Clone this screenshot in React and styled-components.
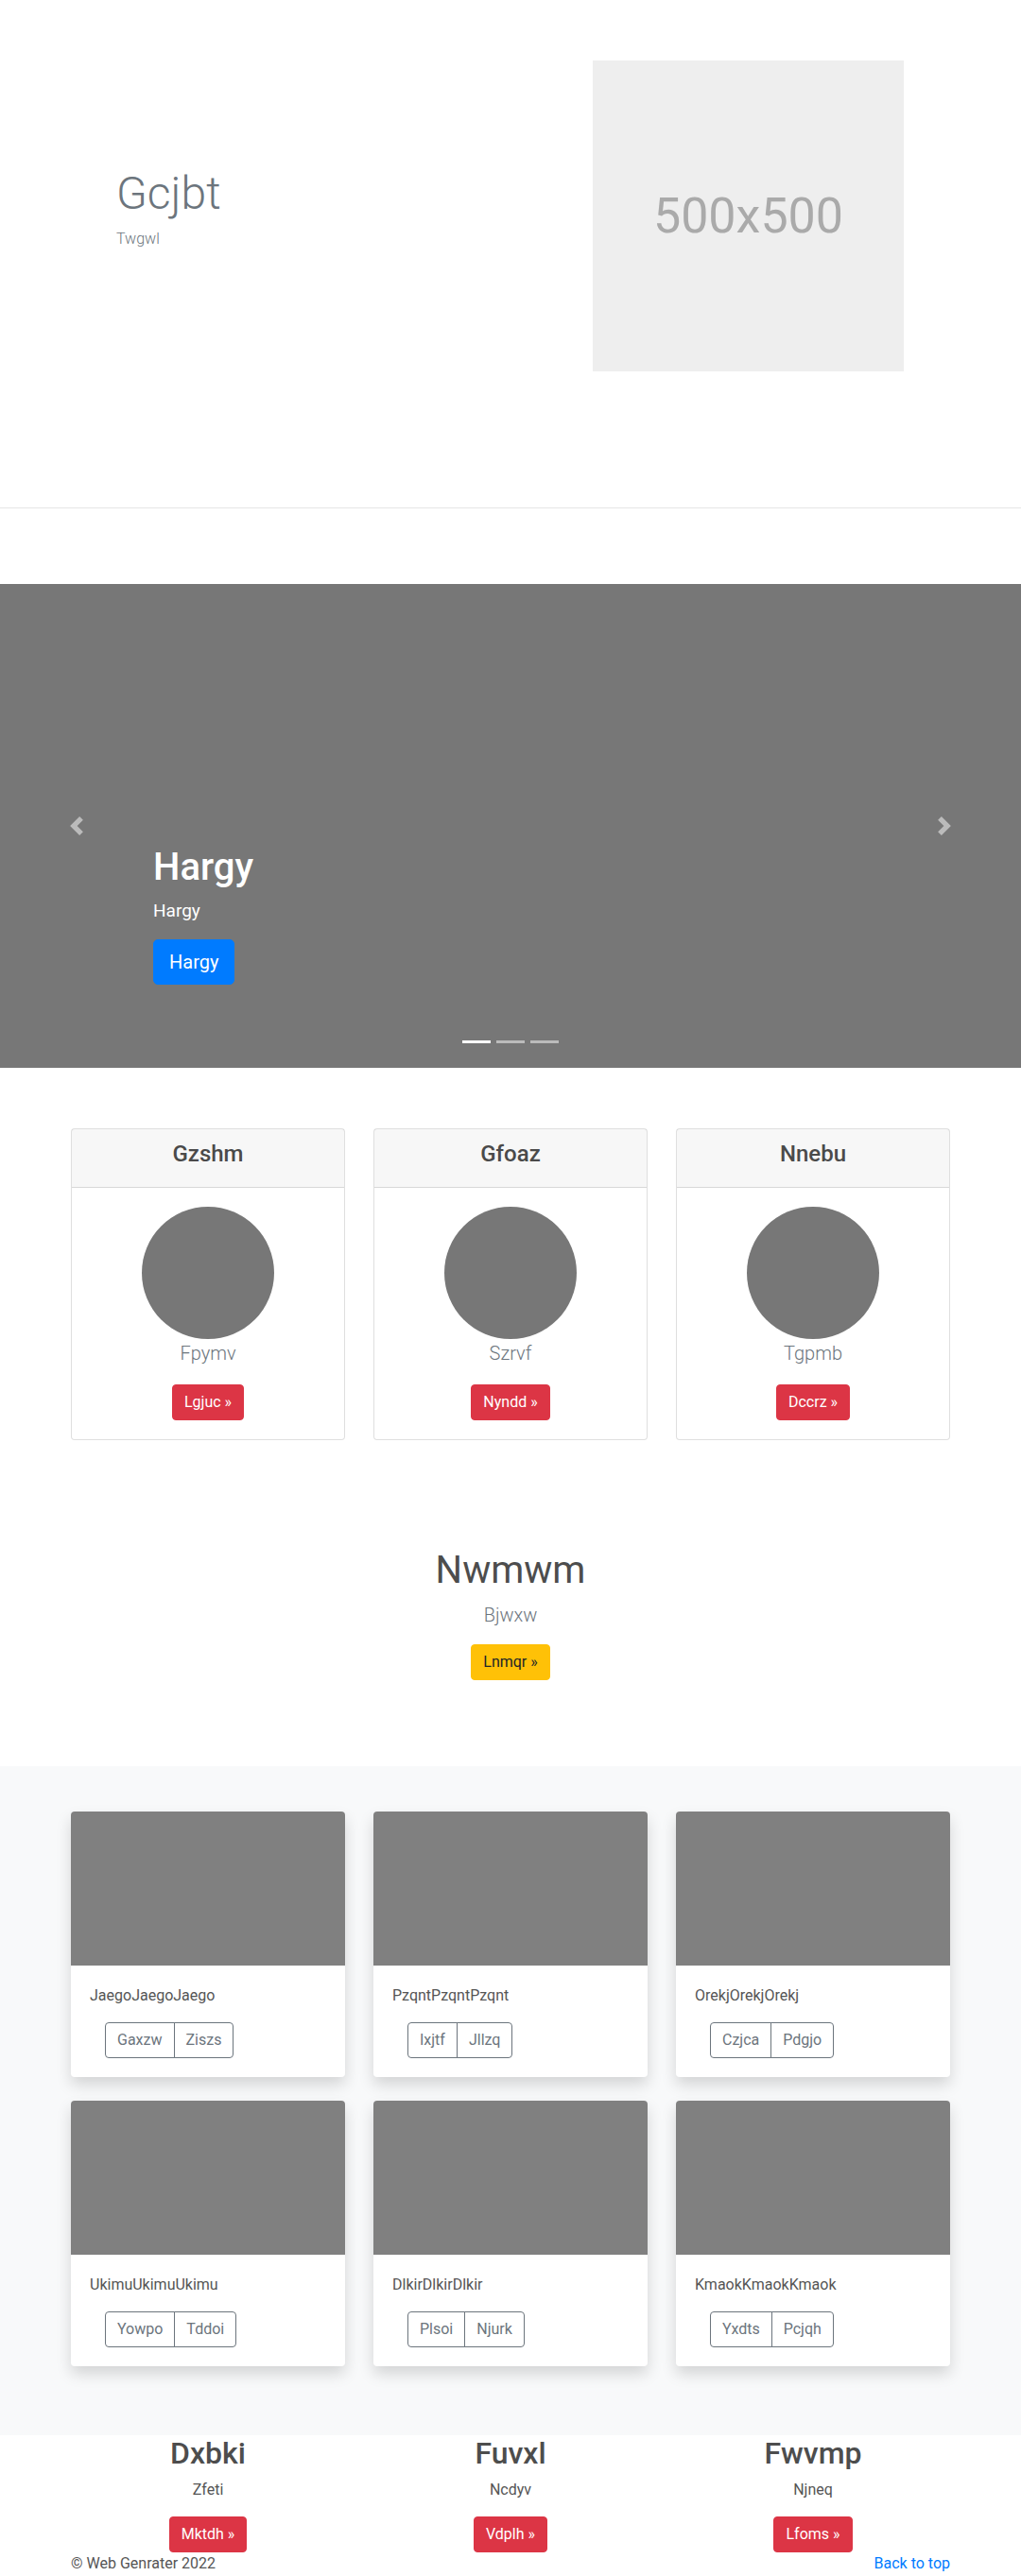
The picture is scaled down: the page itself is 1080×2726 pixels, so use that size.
import React from "react";
import styled, { createGlobalStyle } from "styled-components";

const GlobalStyle = createGlobalStyle`
  body {
    margin: 0;
    font-family: Roboto, "Liberation Sans", Arial, sans-serif;
    font-size: 16px;
    line-height: 1.5;
    color: #555;
    background: #fff;
  }
  * { box-sizing: border-box; }
`;

const Container = styled.div`
  width: 960px;
  margin: 0 auto;
  padding: 0 15px;
`;

const Hero = styled.section`
  padding: 64px 0 144px;
  border-bottom: 1px solid #e5e5e5;
`;

const HeroRow = styled.div`
  display: grid;
  grid-template-columns: 1fr 1fr;
  column-gap: 30px;
  align-items: center;
`;

const HeroText = styled.div`
  padding-left: 48px;
  color: #6c757d;
  h1 {
    margin: 0 0 8px;
    font-size: 48px;
    font-weight: 300;
    line-height: 1.2;
  }
  p {
    margin: 0 0 16px;
    font-weight: 300;
  }
`;

const Placeholder = styled.div`
  width: 329px;
  height: 329px;
  margin-left: 72px;
  background: #eee;
  color: #aaa;
  font-size: 52px;
  display: flex;
  align-items: center;
  justify-content: center;
`;

const Carousel = styled.div`
  position: relative;
  height: 512px;
  margin-top: 80px;
  background: #777;
`;

const Control = styled.div`
  position: absolute;
  top: 0;
  bottom: 0;
  ${(p) => (p.$side === "left" ? "left: 0;" : "right: 0;")}
  width: 15%;
  display: flex;
  align-items: center;
  justify-content: center;
  opacity: 0.5;
`;

const Caption = styled.div`
  position: absolute;
  left: 15%;
  right: 15%;
  bottom: 64px;
  padding: 20px 0 24px;
  color: #fff;
  h1 {
    margin: 0 0 8px;
    font-size: 40px;
    font-weight: 500;
    line-height: 1.2;
  }
  p {
    margin: 0 0 16px;
    font-size: 19px;
  }
`;

const Indicators = styled.div`
  position: absolute;
  left: 0;
  right: 0;
  bottom: 26px;
  display: flex;
  justify-content: center;
  gap: 6px;
`;

const Dot = styled.span`
  width: 30px;
  height: 3px;
  background: #fff;
  opacity: ${(p) => (p.$active ? 1 : 0.5)};
`;

const Button = styled.a`
  display: inline-block;
  padding: ${(p) => (p.$large ? "8px 16px" : "6px 12px")};
  font-size: ${(p) => (p.$large ? "20px" : "16px")};
  line-height: 1.5;
  border-radius: ${(p) => (p.$large ? "5px" : "4px")};
  border: 1px solid ${(p) => p.$bg};
  background: ${(p) => p.$bg};
  color: ${(p) => p.$fg || "#fff"};
  text-decoration: none;
`;

const Grid = styled.div`
  display: grid;
  grid-template-columns: repeat(3, 1fr);
  column-gap: 30px;
  row-gap: ${(p) => p.$rowGap || "0px"};
`;

const PriceSection = styled(Container)`
  margin-top: 64px;
`;

const Card = styled.div`
  border: 1px solid rgba(0, 0, 0, 0.125);
  border-radius: 4px;
  background: #fff;
  text-align: center;
`;

const CardHeader = styled.div`
  padding: 12px 20px;
  background: rgba(0, 0, 0, 0.03);
  border-bottom: 1px solid rgba(0, 0, 0, 0.125);
  h4 {
    margin: 0 0 8px;
    font-size: 24px;
    font-weight: 500;
    line-height: 1.2;
    color: #4a4a4a;
  }
`;

const CardBody = styled.div`
  padding: 20px;
`;

const Avatar = styled.div`
  width: 140px;
  height: 140px;
  margin: 0 auto;
  border-radius: 50%;
  background: #777;
`;

const Lead = styled.p`
  margin: 0 0 ${(p) => p.$mb || "16px"};
  font-size: 20px;
  font-weight: 300;
  color: #6c757d;
`;

const Feature = styled.section`
  text-align: center;
  padding: 114px 0 91px;
  h1 {
    margin: 0 0 8px;
    font-size: 40px;
    font-weight: 400;
    line-height: 1.2;
    color: #4d4d4d;
  }
`;

const Album = styled.section`
  background: #f8f9fa;
  padding: 48px 0 73px;
`;

const AlbumCard = styled.div`
  background: #fff;
  border-radius: 4px;
  overflow: hidden;
  box-shadow: 0 8px 16px rgba(0, 0, 0, 0.15);
`;

const Thumb = styled.div`
  height: 163px;
  background: #808080;
`;

const AlbumBody = styled.div`
  padding: 20px;
  p {
    margin: 0 0 16px;
  }
`;

const BtnGroup = styled.div`
  display: inline-flex;
  margin-left: 16px;
`;

const OutlineBtn = styled.button`
  font: inherit;
  line-height: 1.5;
  padding: 6px 12px;
  background: transparent;
  color: #6c757d;
  border: 1px solid #6c757d;
  border-radius: 0;
  &:first-child {
    border-radius: 4px 0 0 4px;
  }
  &:last-child {
    margin-left: -1px;
    border-radius: 0 4px 4px 0;
  }
`;

const Column = styled.div`
  text-align: center;
  h2 {
    margin: 0 0 8px;
    font-size: 32px;
    font-weight: 500;
    line-height: 1.2;
    color: #4d4d4d;
  }
  p {
    margin: 0 0 16px;
  }
`;

const Footer = styled(Container)`
  display: flex;
  justify-content: space-between;
  a {
    color: #007bff;
    text-decoration: none;
  }
`;

const Chevron = ({ dir }) => (
  <svg width="20" height="20" viewBox="0 0 8 8" fill="#fff">
    {dir === "left" ? (
      <path d="M5.25 0l-4 4 4 4 1.5-1.5L4.25 4l2.5-2.5L5.25 0z" />
    ) : (
      <path d="M2.75 0l-1.5 1.5L3.75 4l-2.5 2.5L2.75 8l4-4-4-4z" />
    )}
  </svg>
);

const pricing = [
  { title: "Gzshm", text: "Fpymv", btn: "Lgjuc »" },
  { title: "Gfoaz", text: "Szrvf", btn: "Nyndd »" },
  { title: "Nnebu", text: "Tgpmb", btn: "Dccrz »" },
];

const album = [
  { text: "JaegoJaegoJaego", a: "Gaxzw", b: "Ziszs" },
  { text: "PzqntPzqntPzqnt", a: "Ixjtf", b: "Jllzq" },
  { text: "OrekjOrekjOrekj", a: "Czjca", b: "Pdgjo" },
  { text: "UkimuUkimuUkimu", a: "Yowpo", b: "Tddoi" },
  { text: "DlkirDlkirDlkir", a: "Plsoi", b: "Njurk" },
  { text: "KmaokKmaokKmaok", a: "Yxdts", b: "Pcjqh" },
];

const columns = [
  { title: "Dxbki", text: "Zfeti", btn: "Mktdh »" },
  { title: "Fuvxl", text: "Ncdyv", btn: "Vdplh »" },
  { title: "Fwvmp", text: "Njneq", btn: "Lfoms »" },
];

const App = () => {
  return (
    <>
      <GlobalStyle />
      <Hero>
        <Container>
          <HeroRow>
            <HeroText>
              <h1>Gcjbt</h1>
              <p>Twgwl</p>
            </HeroText>
            <Placeholder>500x500</Placeholder>
          </HeroRow>
        </Container>
      </Hero>

      <Carousel>
        <Control $side="left">
          <Chevron dir="left" />
        </Control>
        <Control $side="right">
          <Chevron dir="right" />
        </Control>
        <Caption>
          <h1>Hargy</h1>
          <p>Hargy</p>
          <Button $large $bg="#007bff">
            Hargy
          </Button>
        </Caption>
        <Indicators>
          <Dot $active />
          <Dot />
          <Dot />
        </Indicators>
      </Carousel>

      <PriceSection>
        <Grid>
          {pricing.map((item) => (
            <Card key={item.title}>
              <CardHeader>
                <h4>{item.title}</h4>
              </CardHeader>
              <CardBody>
                <Avatar />
                <Lead $mb="18px">{item.text}</Lead>
                <Button $bg="#dc3545">{item.btn}</Button>
              </CardBody>
            </Card>
          ))}
        </Grid>
      </PriceSection>

      <Feature>
        <h1>Nwmwm</h1>
        <Lead>Bjwxw</Lead>
        <Button $bg="#ffc107" $fg="#212529">
          Lnmqr »
        </Button>
      </Feature>

      <Album>
        <Container>
          <Grid $rowGap="25px">
            {album.map((item) => (
              <AlbumCard key={item.text}>
                <Thumb />
                <AlbumBody>
                  <p>{item.text}</p>
                  <BtnGroup>
                    <OutlineBtn>{item.a}</OutlineBtn>
                    <OutlineBtn>{item.b}</OutlineBtn>
                  </BtnGroup>
                </AlbumBody>
              </AlbumCard>
            ))}
          </Grid>
        </Container>
      </Album>

      <Container>
        <Grid>
          {columns.map((col) => (
            <Column key={col.title}>
              <h2>{col.title}</h2>
              <p>{col.text}</p>
              <Button $bg="#dc3545">{col.btn}</Button>
            </Column>
          ))}
        </Grid>
      </Container>

      <Footer>
        <span>© Web Genrater 2022</span>
        <a href="#top">Back to top</a>
      </Footer>
    </>
  );
};

export default App;
